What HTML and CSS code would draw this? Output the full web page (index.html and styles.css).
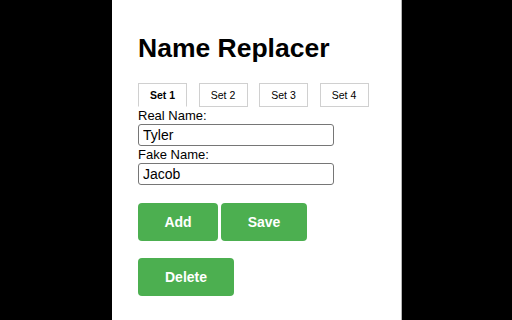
FILE: index.html
```html
<!DOCTYPE html>
<html>
<head>
<meta charset="utf-8">
<title>Name Replacer</title>
<link rel="stylesheet" href="styles.css">
</head>
<body>
<div class="panel">
  <h1 class="title">Name Replacer</h1>
  <div class="tabs">
    <button class="tab active">Set 1</button>
    <button class="tab">Set 2</button>
    <button class="tab">Set 3</button>
    <button class="tab">Set 4</button>
  </div>
  <label class="label" for="real">Real Name:</label>
  <input class="field" id="real" type="text" value="Tyler">
  <label class="label" for="fake">Fake Name:</label>
  <input class="field" id="fake" type="text" value="Jacob">
  <div class="actions">
    <button class="btn btn-add">Add</button>
    <button class="btn btn-save">Save</button>
  </div>
  <div class="actions actions-second">
    <button class="btn btn-delete">Delete</button>
  </div>
</div>
</body>
</html>
```
FILE: styles.css
```css
html, body {
  margin: 0;
  padding: 0;
  height: 100%;
  background: #000;
}

body {
  font-family: "Liberation Sans", Arial, sans-serif;
  color: #000;
  overflow: hidden;
}

.panel {
  box-sizing: border-box;
  margin-left: 112px;
  width: 290px;
  height: 320px;
  background: #fff;
  border-right: 1px solid #b4b4b4;
  padding: 33px 0 0 26px;
}

.title {
  margin: 0;
  font-size: 26.5px;
  line-height: 30px;
  font-weight: bold;
}

.tabs {
  display: flex;
  gap: 11.5px;
  margin-top: 20px;
}

.tab {
  box-sizing: border-box;
  width: 49px;
  height: 24px;
  margin: 0;
  padding: 0;
  background: #fff;
  border: 1px solid #d0d0d0;
  font-family: "Liberation Sans", Arial, sans-serif;
  font-size: 10.5px;
  line-height: 22px;
  color: #000;
  text-align: center;
}

.tab.active {
  font-weight: bold;
  border-bottom-color: #fff;
}

.label {
  display: block;
  font-size: 13px;
  line-height: 17px;
}

.field {
  display: block;
  box-sizing: border-box;
  width: 196px;
  height: 22px;
  margin: 0;
  padding: 0 4px;
  border: 1px solid #767676;
  border-radius: 3px;
  font-family: "Liberation Sans", Arial, sans-serif;
  font-size: 14px;
  color: #000;
  background: #fff;
}

.actions {
  display: flex;
  gap: 3px;
  margin-top: 18px;
}

.actions-second {
  margin-top: 17px;
}

.btn {
  box-sizing: border-box;
  height: 38px;
  margin: 0;
  padding: 0;
  background: #4caf50;
  border: none;
  border-radius: 4px;
  color: #fff;
  font-family: "Liberation Sans", Arial, sans-serif;
  font-size: 14px;
  font-weight: bold;
  text-align: center;
}

.btn-add { width: 80px; }
.btn-save { width: 86px; }
.btn-delete { width: 96px; }
```
